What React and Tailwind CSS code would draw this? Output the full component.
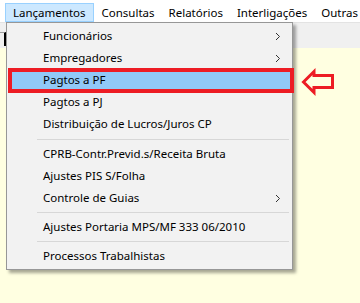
const topMenus = ["Lançamentos", "Consultas", "Relatórios", "Interligações", "Outras Opções"];

const items = [
  { label: "Funcionários", sub: true },
  { label: "Empregadores", sub: true },
  { label: "Pagtos a PF", active: true },
  { label: "Pagtos a PJ" },
  { label: "Distribuição de Lucros/Juros CP" },
  { sep: true, h: "h-[8px]" },
  { label: "CPRB-Contr.Previd.s/Receita Bruta" },
  { label: "Ajustes PIS S/Folha" },
  { label: "Controle de Guias", sub: true },
  { sep: true, h: "h-[7px]" },
  { label: "Ajustes Portaria MPS/MF 333 06/2010" },
  { sep: true, h: "h-[7px]" },
  { label: "Processos Trabalhistas" },
];

function Chevron() {
  return (
    <svg width="6" height="9" viewBox="0 0 6 9" className="absolute right-[9px]">
      <path d="M1 1 L4.5 4.5 L1 8" fill="none" stroke="#333" strokeWidth="1" />
    </svg>
  );
}

export default function App() {
  return (
    <div className="relative w-[360px] h-[303px] overflow-hidden bg-[#ffffe1] text-black text-[11.5px] font-['Noto_Sans',sans-serif]">
      <div className="flex h-[22px] bg-white items-stretch pl-[5px] pt-[3px] whitespace-nowrap gap-[2px]">
        {topMenus.map((m, i) => (
          <div
            key={m}
            className={
              i === 0
                ? "flex items-center px-[7px] bg-[#cce8ff] border border-[#99d1ff]"
                : "flex items-center px-[5px] border border-transparent"
            }
          >
            {m}
          </div>
        ))}
      </div>
      <div className="h-[26px] bg-[#f0f0f0] border-t border-[#e3e3e3] pt-[9px]">
        <div className="w-[6px] h-[14px] border-t border-[#a0a0a0] border-r-2 border-r-black"></div>
      </div>

      <div className="absolute left-[6px] top-[22px] w-[287px] bg-[#f2f2f2] border border-[#979797] py-[2px] shadow-[3px_3px_3px_rgba(0,0,0,0.35)]">
        {items.map((it, i) =>
          it.sep ? (
            <div key={i} className={`${it.h} flex items-center pl-[30px] pr-[3px]`}>
              <div className="h-px w-full bg-[#d7d7d7]"></div>
            </div>
          ) : (
            <div
              key={i}
              className={`relative h-[22px] flex items-center pl-[34px] mx-[2px] ${it.active ? "bg-[#91c9f7]" : ""}`}
            >
              {it.label}
              {it.sub && <Chevron />}
            </div>
          )
        )}
      </div>

      <div className="absolute left-[8px] top-[68px] w-[286px] h-[25px] border-4 border-[#ed1c24]"></div>

      <svg className="absolute left-0 top-0" width="360" height="303">
        <polygon
          points="303.5,82 314,71.5 314,75.5 332.5,75.5 332.5,87.5 314,87.5 314,92.5"
          fill="#ffffe1"
          stroke="#ed1c24"
          strokeWidth="3"
        />
      </svg>
    </div>
  );
}
